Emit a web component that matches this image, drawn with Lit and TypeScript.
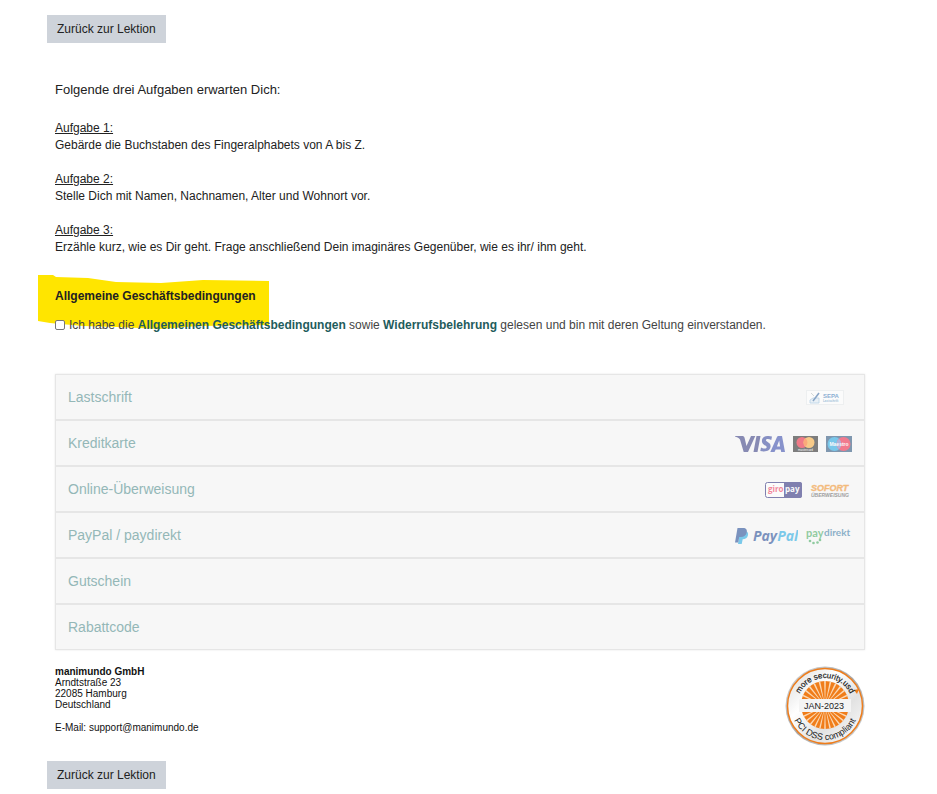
import { LitElement, html, css, svg } from "lit";
import { customElement } from "lit/decorators.js";

const sepa = html`<svg width="46" height="16" viewBox="0 0 46 16" role="img" aria-label="SEPA Lastschrift">
  <rect x="0.5" y="0.5" width="37" height="14" fill="#fff" stroke="#e4e8ea" />
  <path d="M4 10l3-2h6v5H4z" fill="#dcebf6" stroke="#7fb0d8" stroke-width="0.8" />
  <path d="M5 3l3 3" stroke="#9aa" stroke-width="0.8" />
  <path d="M7 11l6-8" stroke="#1d5596" stroke-width="1.5" />
  <text x="17" y="8" font-size="6" font-weight="700" fill="#1868b0">SEPA</text>
  <text x="17" y="12" font-size="3" font-weight="700" fill="#4a8ac0">Lastschrift</text>
</svg>`;

const visa = html`<svg width="50" height="16" viewBox="0 0 50 16" role="img" aria-label="Visa">
  <path d="M0 0h7c1.500 0 2.200.6 2.600 2L11.500 10 16 0h4.300L13 16H8.700L5 3.500C3.500 1.800 1.800 1 0 .6z" fill="#1a1f71" />
  <path d="M21.500 0h4L22.500 16h-4z" fill="#1a1f71" />
  <path d="M37 .6l-.7 3.300c-3-1.300-5.300-1-5.400.4 0 1.800 5 2 4.700 6.300-.3 4-4.600 5.900-10.300 4.500l.7-3.500c3 1.500 5.600 1.200 5.700-.4.100-1.900-4.900-2-4.800-6.300C27.100.3 32-.9 37 .6z" fill="#1a2b90" />
  <path d="M43.300 0H47l3 16h-3.800l-.5-2.500h-5L39.500 16h-4.200L42 1c.3-.7.700-1 1.300-1zm.9 4.500L41.900 10.400h3.200z" fill="#1a2fa0" fill-rule="evenodd" />
</svg>`;

const mastercard = html`<svg width="25" height="16" viewBox="0 0 25 16" role="img" aria-label="Mastercard">
  <rect width="25" height="16" fill="#050505" />
  <circle cx="9" cy="6.500" r="5.500" fill="#eb001b" />
  <circle cx="16" cy="6.500" r="5.500" fill="#f79e1b" />
  <path d="M12.500 2.300a5.500 5.500 0 0 1 0 8.400a5.500 5.500 0 0 1 0-8.400z" fill="#ff5f00" />
  <text x="12.500" y="15" font-size="3" text-anchor="middle" fill="#fff">mastercard</text>
</svg>`;

const maestro = html`<svg width="26" height="16" viewBox="0 0 26 16" role="img" aria-label="Maestro">
  <rect width="26" height="16" fill="#0a3a6a" />
  <circle cx="8.500" cy="8" r="7" fill="#0099df" />
  <circle cx="17.500" cy="8" r="7" fill="#ed0028" />
  <path d="M13 2.700a7 7 0 0 1 0 10.600a7 7 0 0 1 0-10.600z" fill="#6c6bbd" />
  <text x="13" y="10" font-size="5" font-weight="700" text-anchor="middle" fill="#fff">Maestro</text>
</svg>`;

const giropay = html`<svg width="37" height="16" viewBox="0 0 37 16" role="img" aria-label="giropay">
  <rect x="0.500" y="0.500" width="36" height="15" rx="2" fill="#fff" stroke="#0b0b6a" />
  <path d="M19 0h16a2 2 0 0 1 2 2v12a2 2 0 0 1-2 2H19z" fill="#0b0b6a" />
  <text class="rounded" x="3" y="10" font-size="8" font-weight="700" fill="#f01040">giro</text>
  <text class="rounded" x="20" y="10" font-size="8" font-weight="700" fill="#fff">pay</text>
</svg>`;

const sofort = html`<svg width="42" height="16" viewBox="0 0 42 16" role="img" aria-label="Sofort Überweisung">
  <text x="1" y="9" font-size="9" font-weight="700" font-style="italic" fill="#f18000" stroke="#f18000" stroke-width="0.400">SOFORT</text>
  <text x="1" y="15" font-size="5" font-weight="700" font-style="italic" fill="#444">ÜBERWEISUNG</text>
</svg>`;

const paypal = html`<svg width="63" height="18" viewBox="0 0 63 18" role="img" aria-label="PayPal">
  <path d="M5 4h5.500c2.500.6 3 2.500 2.400 4.600-.7 2.700-2.500 3.600-5.200 3.600L6.700 17H3z" fill="#009cde" />
  <path d="M2.500 1H8c3.200 0 4.400 1.800 3.700 4.600C11 8.700 9 10 6 10H4.200L3.300 15.500H0z" fill="#003087" />
  <text class="rounded" x="18" y="14" font-size="14" font-weight="700" font-style="italic" fill="#003087">Pay<tspan fill="#009cde">Pal</tspan></text>
</svg>`;

const paydirekt = html`<svg width="46" height="18" viewBox="0 0 46 18" role="img" aria-label="paydirekt">
  <text class="humanist" x="0" y="10" font-size="11" font-weight="700" fill="#2aa04a">pay</text>
  <text class="humanist" x="18" y="9" font-size="10" font-weight="700" fill="#1a6a9a">direkt</text>
  <g fill="#2aa04a">
    <circle cx="4" cy="14" r="1.300" /><circle cx="7.500" cy="16" r="1.300" />
    <circle cx="11.500" cy="15.500" r="1.300" /><circle cx="14" cy="13" r="1.300" />
  </g>
</svg>`;

const rays = Array.from({ length: 28 }, (_, i) => {
  const at = (a: number) => `${40 + 28 * Math.cos(a)},${40 + 28 * Math.sin(a)}`;
  const start = (i * Math.PI) / 14;
  return svg`<polygon points="40,40 ${at(start - 0.035)} ${at(start + 0.035)}" fill="#fbd9b5" />`;
});

const seal = html`<svg class="seal" width="80" height="80" viewBox="0 0 80 80" role="img" aria-label="PCI DSS compliant">
  <defs>
    <linearGradient id="rim" x1="0" y1="0" x2="1" y2="1">
      <stop offset="0" stop-color="#d8d8d8" /><stop offset="0.5" stop-color="#aaa" /><stop offset="1" stop-color="#d5d5d5" />
    </linearGradient>
    <linearGradient id="face" x1="0" y1="0" x2="1" y2="1">
      <stop offset="0" stop-color="#d9d9d9" /><stop offset="0.35" stop-color="#fff" /><stop offset="0.65" stop-color="#e2e2e2" /><stop offset="1" stop-color="#fff" />
    </linearGradient>
    <clipPath id="core"><circle cx="40" cy="39" r="24" /></clipPath>
    <path id="upper" d="M12 40a28 28 0 0 1 56 0" />
    <path id="lower" d="M6 40a34 34 0 0 0 68 0" />
  </defs>
  <circle cx="40" cy="40" r="39.500" fill="url(#rim)" />
  <circle cx="40" cy="40" r="37.500" fill="url(#face)" stroke="#ee7d1c" stroke-width="1.500" />
  <g clip-path="url(#core)">
    <rect x="14" y="14" width="52" height="52" fill="#f07d1a" />
    ${rays}
  </g>
  <rect x="14" y="33" width="52" height="13" fill="#f4f4f4" />
  <path d="M69 24l5-1-2 5z" fill="#f07d1a" />
  <text font-size="8" fill="#222" stroke="#222" stroke-width="0.200" text-anchor="middle"><textPath href="#upper" startOffset="50%">more security.usd</textPath></text>
  <text font-size="9" fill="#222" text-anchor="middle"><textPath href="#lower" startOffset="50%">PCI DSS compliant</textPath></text>
  <text x="39" y="43" font-size="9" fill="#222" text-anchor="middle">JAN-2023</text>
</svg>`;

const tasks = [
  ["Aufgabe 1:", "Gebärde die Buchstaben des Fingeralphabets von A bis Z."],
  ["Aufgabe 2:", "Stelle Dich mit Namen, Nachnamen, Alter und Wohnort vor."],
  ["Aufgabe 3:", "Erzähle kurz, wie es Dir geht. Frage anschließend Dein imaginäres Gegenüber, wie es ihr/ ihm geht."],
];

const methods = [
  { name: "Lastschrift", logos: [sepa] },
  { name: "Kreditkarte", logos: [visa, mastercard, maestro] },
  { name: "Online-Überweisung", logos: [giropay, sofort] },
  { name: "PayPal / paydirekt", logos: [paypal, paydirekt] },
  { name: "Gutschein", logos: [] },
  { name: "Rabattcode", logos: [] },
];

@customElement("app-root")
export class AppRoot extends LitElement {
  static styles = css`
    :host {
      display: block;
      background: #fff;
      color: #222;
      font: 12px/17px "Liberation Sans", Arial, sans-serif;
    }
    * { box-sizing: border-box; }
    h2, p { margin: 0; }
    .page { padding: 15px 64px 5px 47px; }
    .back {
      display: block;
      height: 28px;
      padding: 0 10px;
      border: 0;
      background: #ced3da;
      color: #222;
      font: inherit;
      cursor: pointer;
    }
    .content { padding: 38px 8px 15px; }
    .intro { font-size: 13px; }
    .tasks { display: flex; flex-direction: column; gap: 17px; margin-top: 22px; }
    .task-name { text-decoration: underline; }
    .terms { position: relative; margin-top: 32px; }
    .marker { position: absolute; left: -17px; top: -13px; pointer-events: none; }
    .terms-title { position: relative; font-size: 12px; font-weight: 700; }
    .agree {
      position: relative;
      display: flex;
      align-items: center;
      margin-top: 12px;
      color: #444;
    }
    .box {
      appearance: none;
      flex: none;
      width: 10px;
      height: 10px;
      margin: 0 4px 2px 0;
      border: 1px solid #767676;
      border-radius: 2px;
      background: #fff;
    }
    .box:checked { background: #1f5c5c; }
    .link { color: #1f5c5c; font-weight: 700; text-decoration: none; }
    .methods {
      margin: 40px 0 0;
      padding: 0;
      list-style: none;
      border: 1px solid #e6e6e6;
      box-shadow: 0 0 2px #e6e6e6;
    }
    .method + .method { border-top: 2px solid #e6e6e6; }
    .choose {
      display: flex;
      align-items: center;
      justify-content: space-between;
      width: 100%;
      height: 44px;
      padding: 0 12px;
      border: 0;
      background: #f7f7f7;
      color: #94b7b7;
      font: 14px/20px "Liberation Sans", Arial, sans-serif;
      text-align: left;
      cursor: pointer;
    }
    .logos { display: flex; align-items: center; gap: 8px; padding-top: 2px; opacity: 0.5; }
    .logos svg { display: block; }
    .rounded { font-family: "Open Sans", sans-serif; }
    .humanist { font-family: Lato, sans-serif; }
    .footer { display: flex; justify-content: space-between; margin-top: 16px; }
    .address { font-size: 10px; font-style: normal; line-height: 11px; color: #111; }
    .mail { margin-top: 12px; }
    .seal { display: block; }
  `;

  render() {
    return html`
      <main class="page">
        <button class="back" type="button">Zurück zur Lektion</button>
        <div class="content">
          <p class="intro">Folgende drei Aufgaben erwarten Dich:</p>
          <div class="tasks">
            ${tasks.map(([name, text]) => html`<div><p class="task-name">${name}</p><p>${text}</p></div>`)}
          </div>
          <section class="terms">
            <svg class="marker" width="232" height="54" viewBox="0 0 232 54" aria-hidden="true">
              <path d="M0 0H15L18 2L50 3L78 7L123 8L165 5L231 6V50L160 51L122 54L80 52L45 51L12 48L0 46Z" fill="#ffe500" />
            </svg>
            <h2 class="terms-title">Allgemeine Geschäftsbedingungen</h2>
            <div class="agree">
              <input class="box" type="checkbox" id="agree" />
              <label for="agree">Ich habe die <a class="link" href="#agb">Allgemeinen Geschäftsbedingungen</a> sowie <a class="link" href="#widerruf">Widerrufsbelehrung</a> gelesen und bin mit deren Geltung einverstanden.</label>
            </div>
          </section>
          <ul class="methods">
            ${methods.map(
              (m) => html`<li class="method">
                <button class="choose" type="button"><span>${m.name}</span><span class="logos">${m.logos}</span></button>
              </li>`,
            )}
          </ul>
          <footer class="footer">
            <address class="address">
              <strong>manimundo GmbH</strong><br />Arndtstraße 23<br />22085 Hamburg<br />Deutschland
              <p class="mail">E-Mail: support@manimundo.de</p>
            </address>
            ${seal}
          </footer>
        </div>
        <button class="back" type="button">Zurück zur Lektion</button>
      </main>
    `;
  }
}
